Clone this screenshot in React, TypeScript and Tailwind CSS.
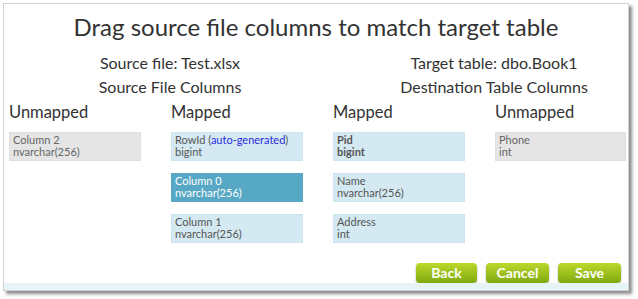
import React from "react";

type Col = { name: string; type: string; bold?: boolean; auto?: boolean; active?: boolean };

const srcUnmapped: Col[] = [{ name: "Column 2", type: "nvarchar(256)" }];
const srcMapped: Col[] = [
  { name: "RowId", type: "bigint", auto: true },
  { name: "Column 0", type: "nvarchar(256)", active: true },
  { name: "Column 1", type: "nvarchar(256)" },
];
const dstMapped: Col[] = [
  { name: "Pid", type: "bigint", bold: true },
  { name: "Name", type: "nvarchar(256)" },
  { name: "Address", type: "int" },
];
const dstUnmapped: Col[] = [{ name: "Phone", type: "int" }];

function ColumnBox({ col, mapped }: { col: Col; mapped: boolean }) {
  const tone = col.active
    ? "bg-[#56a8c5] border-[#56a8c5] text-white"
    : mapped
      ? "bg-[#d4e9f1] border-[#cde5ee] text-[#555]"
      : "bg-[#e5e5e5] border-[#dedede] text-[#666]";
  return (
    <div className={`h-[29px] border px-[3px] pt-[1px] text-[11px] leading-[12px] ${tone} ${col.bold ? "font-bold" : ""}`}>
      <div>
        {col.name}
        {col.auto && (
          <>
            {" "}(<span className="text-[#2b2bdb]">auto-generated</span>)
          </>
        )}
      </div>
      <div>{col.type}</div>
    </div>
  );
}

function Group({ title, cols, mapped }: { title: string; cols: Col[]; mapped: boolean }) {
  return (
    <div className="flex flex-col">
      <div className="text-[16.5px] leading-[24px] text-[#333]">{title}</div>
      <div className="mt-[8px] flex flex-col gap-3">
        {cols.map((c) => (
          <ColumnBox key={c.name} col={c} mapped={mapped} />
        ))}
      </div>
    </div>
  );
}

function GreenButton({ label, w }: { label: string; w: string }) {
  return (
    <button
      className={`${w} h-[20px] rounded-[4px] bg-gradient-to-b from-[#bcd92c] to-[#80a90d] text-[14px] font-bold leading-[20px] text-white shadow-[0_1px_2px_rgba(0,0,0,0.35)]`}
    >
      {label}
    </button>
  );
}

export default function App() {
  return (
    <div className="w-[638px] h-[299px] bg-white pt-[3px] pl-[3px] font-['Lato',sans-serif]">
      <div className="w-[626px] h-[288px] border border-[#d2d2d2] bg-white shadow-[3px_3px_3px_rgba(0,0,0,0.45)] flex flex-col">
        <h1 className="pt-[7px] text-center text-[24px] leading-[32px] text-[#333]">
          Drag source file columns to match target table
        </h1>

        <div className="mt-[8px] flex text-[16px] leading-[24px] text-[#333]">
          <div className="ml-[36px] w-[260px] text-center">
            <div>Source file: Test.xlsx</div>
            <div>Source File Columns</div>
          </div>
          <div className="ml-[64px] w-[260px] text-center">
            <div>Target table: dbo.Book1</div>
            <div>Destination Table Columns</div>
          </div>
        </div>

        <div className="mt-[1px] ml-[5px] grid grid-cols-[132px_132px_132px_131px] gap-x-[30px]">
          <Group title="Unmapped" cols={srcUnmapped} mapped={false} />
          <Group title="Mapped" cols={srcMapped} mapped />
          <Group title="Mapped" cols={dstMapped} mapped />
          <Group title="Unmapped" cols={dstUnmapped} mapped={false} />
        </div>

        <div className="mt-auto flex justify-end gap-[9px] pr-[7px]">
          <GreenButton label="Back" w="w-[61px]" />
          <GreenButton label="Cancel" w="w-[63px]" />
          <GreenButton label="Save" w="w-[63px]" />
        </div>
        <div className="h-[7px] bg-[#e6f3f7]" />
      </div>
    </div>
  );
}
